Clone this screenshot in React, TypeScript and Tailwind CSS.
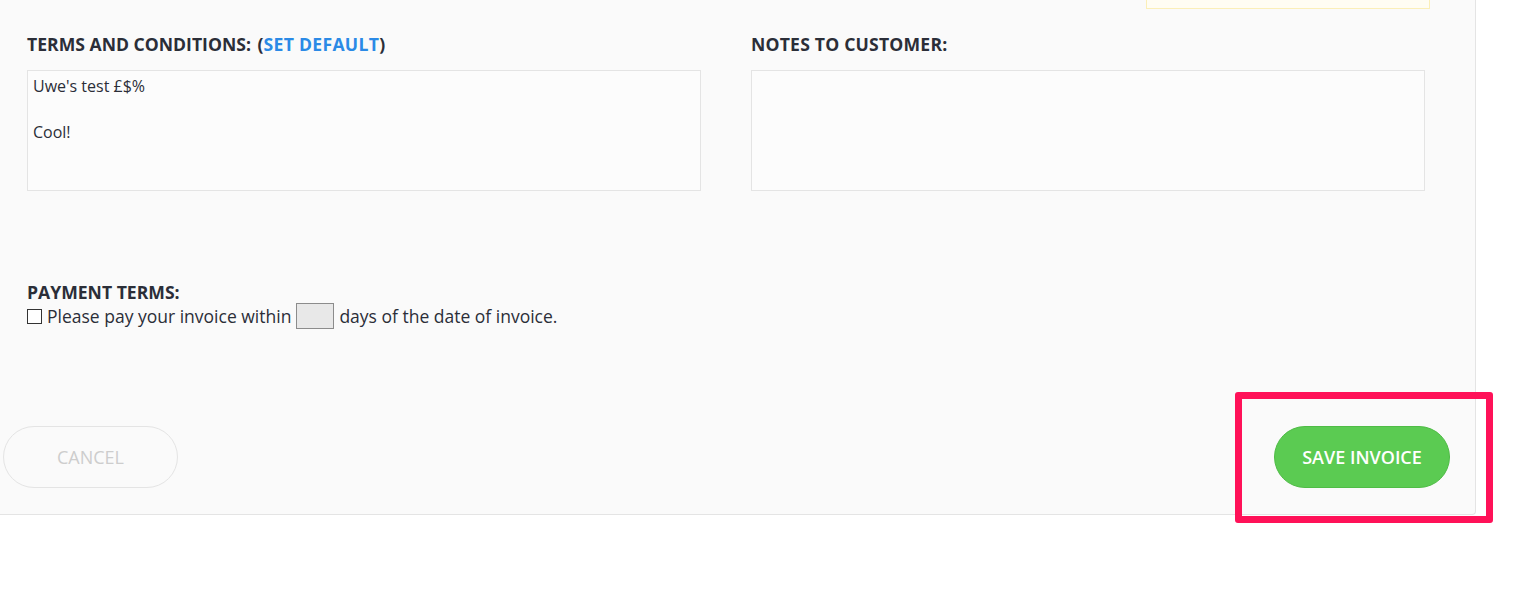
export default function App() {
  return (
    <div className="relative h-[593px] w-full bg-white font-['Open_Sans',sans-serif] text-[#2b2e38]">
      <div className="h-[515px] w-[1476px] rounded-br-[4px] border-r border-b border-[#e4e4e4] bg-[#fafafa]">
        <div className="flex justify-end pr-[45px]">
          <div className="h-[9px] w-[284px] border-x border-b border-[#fbefb8] bg-[#fffdf3]" />
        </div>

        <div className="grid grid-cols-[674px_674px] gap-x-[50px] px-[27px] pt-[24px]">
          <div>
            <h3 className="text-[17.6px] leading-[22px] font-bold">
              TERMS AND CONDITIONS: <span className="ml-[2px]">(</span>
              <a className="tracking-[0.3px] text-[#2b8ae6]">SET DEFAULT</a>)
            </h3>
            <div className="mt-[15px] h-[121px] border border-[#e4e4e4] bg-[#fcfcfc] px-[5px] py-[4px] text-[16px] leading-[23px]">
              <p>Uwe's test £$%</p>
              <p>&nbsp;</p>
              <p>Cool!</p>
            </div>
          </div>
          <div>
            <h3 className="text-[17.6px] leading-[22px] font-bold tracking-[0.2px]">NOTES TO CUSTOMER:</h3>
            <div className="mt-[15px] h-[121px] border border-[#e4e4e4] bg-[#fcfcfc]" />
          </div>
        </div>

        <div className="px-[27px] pt-[90px]">
          <h3 className="text-[17.6px] leading-[22px] font-bold">PAYMENT TERMS:</h3>
          <div className="flex items-center text-[17.5px] leading-[26px]">
            <span className="mr-[5px] h-[15px] w-[15px] border border-[#333] bg-white" />
            <span>Please pay your invoice within</span>
            <span className="mx-[5px] h-[26px] w-[38px] border border-[#8c8c8c] bg-[#e8e8e8]" />
            <span>days of the date of invoice.</span>
          </div>
        </div>

        <div className="flex items-center justify-between pt-[97px] pr-[25px] pl-[3px]">
          <button className="h-[62px] w-[175px] rounded-full border border-[#e4e4e4] text-[18px] text-[#cdcdcd]">
            CANCEL
          </button>
          <button className="h-[62px] w-[176px] rounded-full border border-[#4fbc46] bg-[#5bcb52] text-[18px] font-semibold text-white">
            SAVE INVOICE
          </button>
        </div>
      </div>

      <div className="absolute top-[392px] left-[1235px] h-[131px] w-[258px] rounded-[3px] border-[7px] border-[#ff1158]" />
    </div>
  );
}
